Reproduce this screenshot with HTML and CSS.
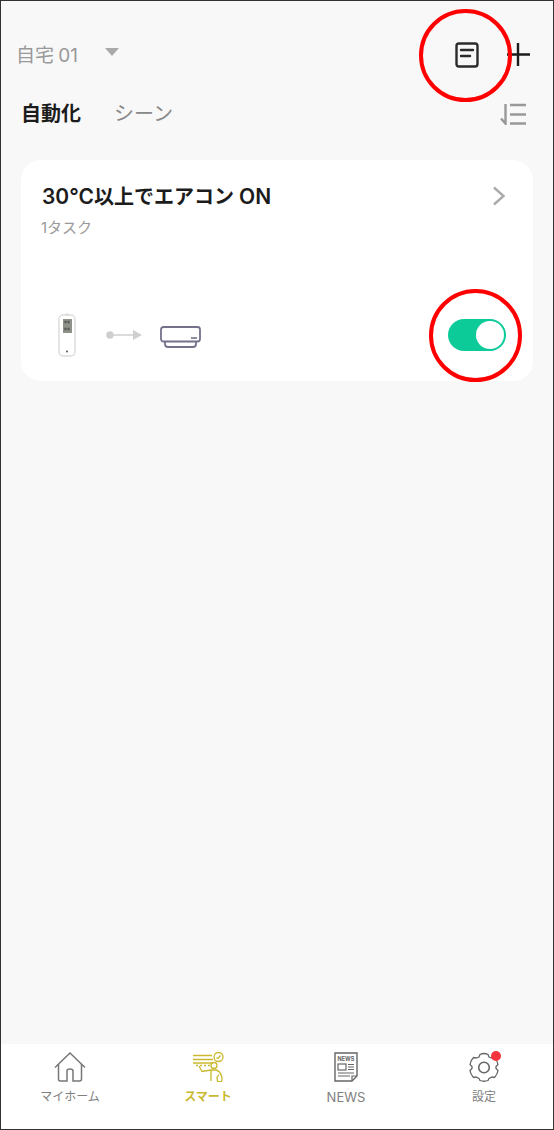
FILE: index.html
```html
<!DOCTYPE html>
<html lang="ja">
<head>
    <meta charset="UTF-8">
    <meta name="viewport" content="width=device-width, initial-scale=1.0">
    <title>スマート</title>
    <link rel="stylesheet" href="styles.css">
</head>
<body>

<div class="frame">
    <header class="top-bar">
        <div class="home-select">
            <span>自宅 01</span>
            <i class="caret"></i>
        </div>
        <div class="top-actions">
            <svg class="doc-icon" width="24" height="26" viewBox="0 0 24 26" fill="none" stroke="#2b2b2b" stroke-width="2.4" stroke-linecap="round">
                <rect x="1.5" y="1.5" width="21" height="23" rx="2.5"/>
                <path d="M6 8h12M6 14h9"/>
            </svg>
            <svg class="plus-icon" width="23" height="23" viewBox="0 0 23 23" stroke="#1c1c1c" stroke-width="2.4">
                <path d="M0 11.5h23M11 0v23"/>
            </svg>
        </div>
    </header>

    <nav class="tabs">
        <span class="tab active">自動化</span>
        <span class="tab">シーン</span>
        <svg class="sort-icon" width="26" height="22" viewBox="0 0 26 22" fill="none" stroke="#999" stroke-width="2.4">
            <path d="M5.500 1v19.500L1 15.500M10 2h16M10 11.500h16M10 20.500h16"/>
        </svg>
    </nav>

    <main class="content">
        <section class="card">
            <div class="card-head">
                <div>
                    <h3 class="card-title">30°C<span class="title-ja">以上でエアコン</span>ON</h3>
                    <p class="card-sub">1タスク</p>
                </div>
                <svg class="chevron" width="14" height="20" viewBox="0 0 14 20" fill="none" stroke="#aaa" stroke-width="2.4">
                    <path d="M2 1.500l9.500 8.500-9.500 8.500"/>
                </svg>
            </div>
            <div class="card-foot">
                <div class="flow">
                    <svg width="20" height="44" viewBox="0 0 20 44">
                        <rect x="2" y="2" width="16" height="41" rx="4" fill="#fff" stroke="#ddd" stroke-width="1.500"/>
                        <rect x="8" y="0.500" width="4" height="2" fill="#ddd"/>
                        <rect x="6" y="6" width="9" height="14" fill="#8d9289"/>
                        <path d="M7.500 9h6M7.500 16h6" stroke="#555" stroke-width="2.500" stroke-dasharray="2 1"/>
                        <circle cx="10" cy="38.500" r="1" fill="#555"/>
                    </svg>
                    <svg class="flow-arrow" width="36" height="12" viewBox="0 0 36 12">
                        <circle cx="4" cy="6" r="3.800" fill="#cfcfcf"/>
                        <path d="M4 6h24" stroke="#cfcfcf" stroke-width="1.500"/>
                        <path d="M27 1l9 5-9 5z" fill="#cfcfcf"/>
                    </svg>
                    <svg class="flow-ac" width="41" height="22" viewBox="0 0 41 22" fill="none" stroke="#73728a" stroke-width="1.800">
                        <rect x="1" y="1" width="39" height="14.500" rx="2.500"/>
                        <path d="M5 15.500v2.500q0 3 3 3h25q3 0 3-3v-2.500"/>
                        <path d="M31 12h6" stroke-width="1.600"/>
                    </svg>
                </div>
                <div class="toggle"><i class="knob"></i></div>
            </div>
        </section>
    </main>

    <footer class="tab-bar">
        <div class="bar-item">
            <svg width="32" height="30" viewBox="0 0 32 30" fill="none" stroke="#777" stroke-width="1.500">
                <path d="M1 15.500L16 1l15 14.500"/>
                <path d="M4.500 12v15q0 2 2 2h6.500V19q0-2 3-2t3 2v10h6.500q2 0 2-2V12"/>
            </svg>
            <span>マイホーム</span>
        </div>
        <div class="bar-item current">
            <svg width="32" height="30" viewBox="0 0 32 30" fill="none" stroke="#c9b92f" stroke-width="1.300">
                <circle cx="26.500" cy="5" r="4.500"/>
                <path d="M24.500 5.500l1.500 1 2.500-3"/>
                <path d="M1 3.500h19M1 7.500h20M1 11h20" />
                <path d="M4 13.500h14" stroke-dasharray="2 2"/>
                <circle cx="22" cy="13.500" r="3"/>
                <path d="M7 14l3 5.500 9-1.500h5q4 1 5.500 6t-1 6l-3-.5-.5-4 2-3M19 18v11"/>
            </svg>
            <span>スマート</span>
        </div>
        <div class="bar-item">
            <svg width="24" height="30" viewBox="0 0 24 30" fill="none" stroke="#666" stroke-width="1.200">
                <path d="M1 1h22v23l-5 5H1z" stroke-width="1.400"/>
                <path d="M18 29v-5h5"/>
                <text x="3.500" y="9" class="news-mark">NEWS</text>
                <rect x="4" y="12" width="8" height="6"/>
                <path d="M14 12.500h6M14 15h6M14 17.500h6M4 21h16M4 24h12"/>
            </svg>
            <span class="news-label">NEWS</span>
        </div>
        <div class="bar-item">
            <div class="gear-wrap">
                <svg width="30" height="30" viewBox="0 0 30 30" fill="none" stroke="#666" stroke-width="1.300">
                    <path d="M11 2.500q4-2 8 0l1 2.500 3 1 2.500-.5q3 3 3.500 7l-2 2 0 2 2 2q-.5 4-3.500 7l-2.500-.5-3 1.500-1 2q-4 1.500-8 0l-1-2-3-1.500-2.500.5q-3-3-3.500-7l2-2v-2l-2-2q.5-4 3.500-7l2.500.5 3-1z"/>
                    <circle cx="15" cy="15.500" r="5.300" stroke-width="1.600"/>
                </svg>
                <i class="badge"></i>
            </div>
            <span>設定</span>
        </div>
    </footer>

    <div class="ring ring-doc"></div>
    <div class="ring ring-toggle"></div>
</div>

</body>
</html>
```

FILE: styles.css
```css
* {
    box-sizing: border-box;
}
body {
    margin: 0;
    font-family: Inter, "Noto Sans CJK JP", sans-serif;
    background-color: #f8f8f8;
}
.frame {
    position: relative;
    display: flex;
    flex-direction: column;
    height: 1130px;
    border: 1px solid #333;
    background-color: #f8f8f8;
}
.top-bar {
    display: flex;
    justify-content: space-between;
    align-items: center;
    height: 53px;
    margin-top: 27px;
    padding: 0 23px 0 15px;
}
.home-select {
    display: flex;
    align-items: center;
    margin-bottom: 2px;
    font-size: 19px;
    word-spacing: -1px;
    color: #999;
}
.caret {
    width: 0;
    height: 0;
    margin-left: 27px;
    margin-bottom: 3px;
    border-left: 7px solid transparent;
    border-right: 7px solid transparent;
    border-top: 8px solid #aaa;
}
.top-actions {
    display: flex;
    align-items: center;
    gap: 28px;
}
.tabs {
    display: flex;
    align-items: center;
    height: 40px;
    margin-top: 11px;
    padding: 0 27px 0 20px;
}
.tab {
    margin-right: 33px;
    font-size: 20px;
    color: #888;
}
.tab.active {
    font-weight: 700;
    color: #1c1c1c;
}
.sort-icon {
    margin-left: auto;
    margin-top: 3px;
}
.content {
    flex: 1;
    padding: 28px 20px 0;
}
.card {
    display: flex;
    flex-direction: column;
    justify-content: space-between;
    height: 221px;
    padding: 23px 27px 24px 21px;
    border-radius: 20px;
    background-color: white;
}
.card-head {
    display: flex;
    justify-content: space-between;
    align-items: flex-start;
}
.card-title {
    margin: 0;
    font-size: 21px;
    line-height: 28px;
    font-weight: 600;
    color: #1c1c1c;
}
.title-ja {
    margin-right: 5px;
    font-size: 20px;
}
.card-sub {
    margin: 6px 0 0 -1px;
    font-size: 15px;
    line-height: 22px;
    color: #999;
}
.chevron {
    margin-top: 3px;
}
.card-foot {
    display: flex;
    justify-content: space-between;
    align-items: center;
}
.flow {
    display: flex;
    align-items: center;
    margin-left: 15px;
}
.flow-arrow {
    margin-left: 29px;
}
.flow-ac {
    margin-left: 18px;
    margin-top: 4px;
}
.toggle {
    display: flex;
    justify-content: flex-end;
    align-items: center;
    width: 58px;
    height: 32px;
    margin-bottom: 1px;
    padding-right: 2px;
    border-radius: 16px;
    background-color: #0ccb99;
}
.knob {
    width: 28px;
    height: 28px;
    border-radius: 50%;
    background-color: white;
}
.tab-bar {
    display: grid;
    grid-template-columns: repeat(4, 1fr);
    height: 85px;
    padding-top: 8px;
    background-color: white;
}
.bar-item {
    display: flex;
    flex-direction: column;
    align-items: center;
    font-size: 12px;
    line-height: 16px;
    color: #808080;
}
.bar-item svg {
    display: block;
}
.bar-item span {
    margin-top: 7px;
}
.bar-item .news-label {
    font-size: 13px;
}
.bar-item.current {
    font-weight: 700;
    color: #c9b92f;
}
.news-mark {
    font-size: 5.500px;
    font-weight: 700;
    fill: #666;
    stroke: none;
}
.gear-wrap {
    position: relative;
}
.badge {
    position: absolute;
    top: -1px;
    right: -2px;
    width: 10px;
    height: 10px;
    border-radius: 50%;
    background-color: #f5333f;
}
.ring {
    position: absolute;
    width: 93px;
    height: 93px;
    border: 4px solid #f00;
    border-radius: 50%;
}
.ring-doc {
    top: 8px;
    left: 418px;
}
.ring-toggle {
    top: 288px;
    left: 428px;
}
```
